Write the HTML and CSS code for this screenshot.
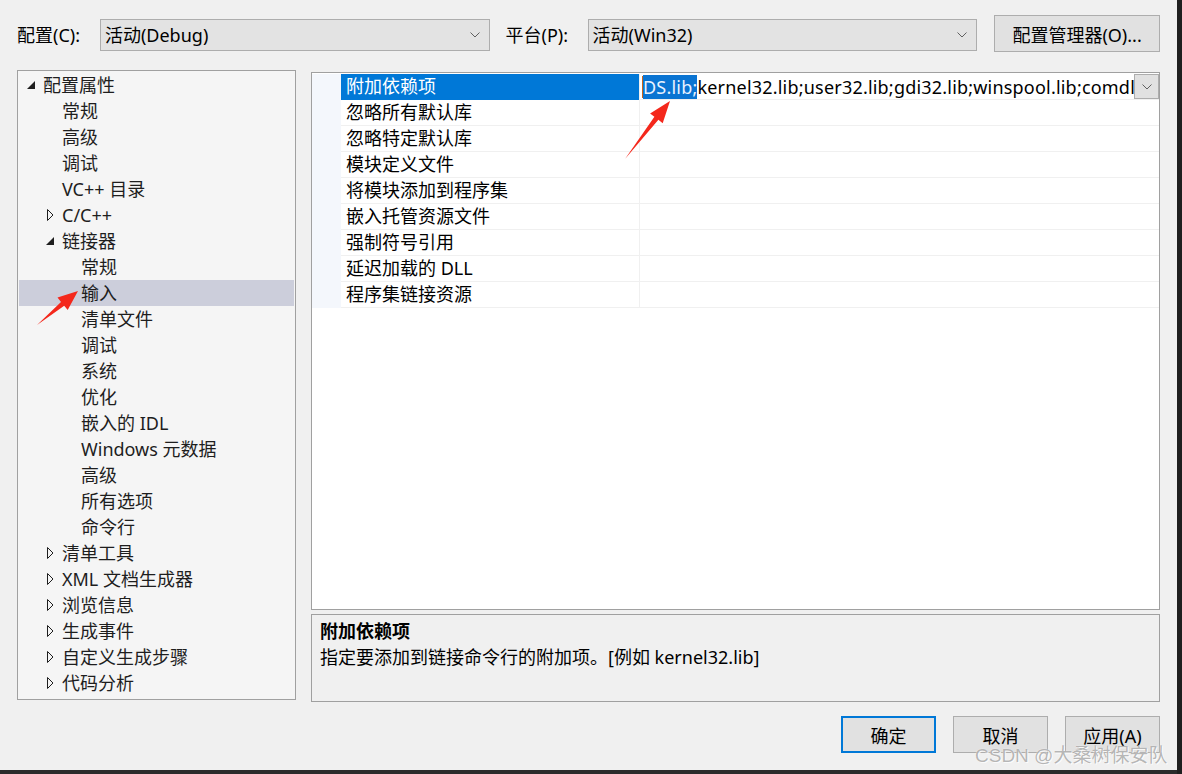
FILE: index.html
```html
<!DOCTYPE html>
<html lang="zh-CN">
<head>
<meta charset="utf-8">
<title>属性页</title>
<link rel="stylesheet" href="styles.css">
</head>
<body>
<div class="screen">
  <div class="window">
    <div class="topbar">
      <span class="lbl lbl-config">配置(C):</span>
      <div class="combo"><span class="combo-text">活动(Debug)</span><svg class="chev" width="10" height="6" viewBox="0 0 10 6"><polyline points="0.5,0.5 5,5 9.5,0.5" fill="none" stroke="#606060" stroke-width="1"/></svg></div>
      <span class="lbl lbl-platform">平台(P):</span>
      <div class="combo"><span class="combo-text">活动(Win32)</span><svg class="chev" width="10" height="6" viewBox="0 0 10 6"><polyline points="0.5,0.5 5,5 9.5,0.5" fill="none" stroke="#606060" stroke-width="1"/></svg></div>
      <button class="btn btn-mgr">配置管理器(O)...</button>
    </div>

    <div class="main">
      <div class="tree">
        <div class="trow l0"><span class="tog"><svg width="9" height="8" viewBox="0 0 9 8"><polygon points="8,0 8,8 0,8" fill="#1e1e1e"/></svg></span><span>配置属性</span></div>
        <div class="trow l1"><span class="tog"></span><span>常规</span></div>
        <div class="trow l1"><span class="tog"></span><span>高级</span></div>
        <div class="trow l1"><span class="tog"></span><span>调试</span></div>
        <div class="trow l1"><span class="tog"></span><span>VC++ 目录</span></div>
        <div class="trow l1"><span class="tog"><svg class="coll" width="7" height="12" viewBox="0 0 7 12"><polygon points="0.5,0.5 6,6 0.5,11.5" fill="none" stroke="#1e1e1e" stroke-width="1"/></svg></span><span>C/C++</span></div>
        <div class="trow l1"><span class="tog"><svg width="9" height="8" viewBox="0 0 9 8"><polygon points="8,0 8,8 0,8" fill="#1e1e1e"/></svg></span><span>链接器</span></div>
        <div class="trow l2"><span class="tog"></span><span>常规</span></div>
        <div class="trow l2 sel"><span class="tog"></span><span>输入</span></div>
        <div class="trow l2"><span class="tog"></span><span>清单文件</span></div>
        <div class="trow l2"><span class="tog"></span><span>调试</span></div>
        <div class="trow l2"><span class="tog"></span><span>系统</span></div>
        <div class="trow l2"><span class="tog"></span><span>优化</span></div>
        <div class="trow l2"><span class="tog"></span><span>嵌入的 IDL</span></div>
        <div class="trow l2"><span class="tog"></span><span>Windows 元数据</span></div>
        <div class="trow l2"><span class="tog"></span><span>高级</span></div>
        <div class="trow l2"><span class="tog"></span><span>所有选项</span></div>
        <div class="trow l2"><span class="tog"></span><span>命令行</span></div>
        <div class="trow l1"><span class="tog"><svg class="coll" width="7" height="12" viewBox="0 0 7 12"><polygon points="0.5,0.5 6,6 0.5,11.5" fill="none" stroke="#1e1e1e" stroke-width="1"/></svg></span><span>清单工具</span></div>
        <div class="trow l1"><span class="tog"><svg class="coll" width="7" height="12" viewBox="0 0 7 12"><polygon points="0.5,0.5 6,6 0.5,11.5" fill="none" stroke="#1e1e1e" stroke-width="1"/></svg></span><span>XML 文档生成器</span></div>
        <div class="trow l1"><span class="tog"><svg class="coll" width="7" height="12" viewBox="0 0 7 12"><polygon points="0.5,0.5 6,6 0.5,11.5" fill="none" stroke="#1e1e1e" stroke-width="1"/></svg></span><span>浏览信息</span></div>
        <div class="trow l1"><span class="tog"><svg class="coll" width="7" height="12" viewBox="0 0 7 12"><polygon points="0.5,0.5 6,6 0.5,11.5" fill="none" stroke="#1e1e1e" stroke-width="1"/></svg></span><span>生成事件</span></div>
        <div class="trow l1"><span class="tog"><svg class="coll" width="7" height="12" viewBox="0 0 7 12"><polygon points="0.5,0.5 6,6 0.5,11.5" fill="none" stroke="#1e1e1e" stroke-width="1"/></svg></span><span>自定义生成步骤</span></div>
        <div class="trow l1"><span class="tog"><svg class="coll" width="7" height="12" viewBox="0 0 7 12"><polygon points="0.5,0.5 6,6 0.5,11.5" fill="none" stroke="#1e1e1e" stroke-width="1"/></svg></span><span>代码分析</span></div>
      </div>

      <div class="rightcol">
        <div class="grid">
          <div class="grow">
            <div class="gmargin"></div>
            <div class="gname active">附加依赖项</div>
            <div class="gval edit">
              <span class="caret"></span><span class="selt">DS.lib;</span><span class="rest">kernel32.lib;user32.lib;gdi32.lib;winspool.lib;comdl</span>
              <span class="ddbtn"><svg width="10" height="6" viewBox="0 0 10 6"><polyline points="0.5,0.5 5,5 9.5,0.5" fill="none" stroke="#606060" stroke-width="1"/></svg></span>
            </div>
          </div>
          <div class="grow"><div class="gmargin"></div><div class="gname">忽略所有默认库</div><div class="gval"></div></div>
          <div class="grow"><div class="gmargin"></div><div class="gname">忽略特定默认库</div><div class="gval"></div></div>
          <div class="grow"><div class="gmargin"></div><div class="gname">模块定义文件</div><div class="gval"></div></div>
          <div class="grow"><div class="gmargin"></div><div class="gname">将模块添加到程序集</div><div class="gval"></div></div>
          <div class="grow"><div class="gmargin"></div><div class="gname">嵌入托管资源文件</div><div class="gval"></div></div>
          <div class="grow"><div class="gmargin"></div><div class="gname">强制符号引用</div><div class="gval"></div></div>
          <div class="grow"><div class="gmargin"></div><div class="gname">延迟加载的 DLL</div><div class="gval"></div></div>
          <div class="grow"><div class="gmargin"></div><div class="gname">程序集链接资源</div><div class="gval"></div></div>
        </div>
        <div class="desc">
          <div class="desc-title">附加依赖项</div>
          <div class="desc-text">指定要添加到链接命令行的附加项。[例如 kernel32.lib]</div>
        </div>
      </div>
    </div>

    <div class="footer">
      <button class="btn dlg default">确定</button>
      <button class="btn dlg">取消</button>
      <button class="btn dlg">应用(A)</button>
    </div>
  </div>
  <div class="edge"></div>
</div>

<svg class="arrows" width="1182" height="774" viewBox="0 0 1182 774">
  <polygon fill="#f4281c" points="37,325 64.2,305.7 67.7,310 78,291 57.5,297.6 61,301.9"/>
  <polygon fill="#f4281c" points="625,159 658.4,119.8 662.7,123.2 670,101 650.1,113.4 654.4,116.8"/>
</svg>
<div class="watermark">CSDN @大桑树保安队</div>
</body>
</html>
```

FILE: styles.css
```css
* { box-sizing: border-box; }

html, body {
  margin: 0;
  padding: 0;
}

body {
  width: 1182px;
  height: 774px;
  overflow: hidden;
  background: #2b2b2b;
  font-family: "Noto Sans", "Noto Sans CJK SC", sans-serif;
  font-size: 18px;
  color: #000;
  position: relative;
}

.screen {
  display: flex;
  height: 774px;
}

.window {
  width: 1177px;
  height: 770px;
  background: #f0f0f0;
  display: flex;
  flex-direction: column;
  padding: 15px 17px 0 17px;
}

.edge {
  flex: 1;
  background: #1f1f1f;
}

/* top bar */
.topbar {
  display: flex;
  align-items: flex-start;
  height: 37px;
}

.lbl {
  height: 37px;
  line-height: 40px;
  color: #000;
  white-space: nowrap;
}
.lbl-config { width: 83px; }
.lbl-platform { width: 82px; margin-left: 16px; }

.combo {
  width: 390px;
  height: 32px;
  margin-top: 4px;
  background: #e3e3e3;
  border: 1px solid #adadad;
  display: flex;
  align-items: center;
  justify-content: space-between;
  padding: 0 9px 0 4px;
}
.combo-text { line-height: 30px; }

.btn {
  font-family: inherit;
  font-size: 18px;
  color: #000;
  background: #e1e1e1;
  border: 1px solid #adadad;
  padding: 0;
  margin: 0;
}
.btn-mgr {
  width: 166px;
  height: 37px;
  margin-left: 17px;
}

/* main */
.main {
  display: flex;
  margin-top: 18px;
  height: 632px;
}

.tree {
  width: 279px;
  height: 630px;
  background: #f5f5f5;
  border: 1px solid #a0a0a0;
  padding: 1px;
  color: #1e1e1e;
}

.trow {
  height: 26px;
  display: flex;
  align-items: center;
  line-height: 26px;
  white-space: nowrap;
}
.trow.l0 { padding-left: 8px; }
.trow.l1 { padding-left: 27px; }
.trow.l2 { padding-left: 46px; }
.trow.sel { background: #cccedb; }

.tog {
  width: 16px;
  height: 26px;
  display: flex;
  align-items: center;
  flex: none;
}
.tog svg { display: block; }
.tog .coll { margin-left: 1px; }

.rightcol {
  width: 849px;
  margin-left: 15px;
  margin-top: 2px;
  display: flex;
  flex-direction: column;
}

.grid {
  height: 538px;
  background: #fff;
  border: 1px solid #a0a0a0;
  padding-top: 1px;
}

.grow {
  display: flex;
  height: 26px;
}
.gmargin {
  width: 29px;
  background: #f4f7fc;
  flex: none;
}
.gname {
  width: 298px;
  flex: none;
  padding-left: 5px;
  line-height: 25px;
  border-bottom: 1px solid #f0f0f0;
  white-space: nowrap;
}
.gname.active {
  background: #0078d7;
  color: #fff;
  border-bottom-color: #0078d7;
}
.gval {
  flex: 1;
  border-left: 1px solid #f0f0f0;
  border-bottom: 1px solid #f0f0f0;
  position: relative;
  overflow: hidden;
  white-space: nowrap;
  line-height: 24px;
}
.gval.edit {
  display: flex;
  align-items: center;
  padding-left: 2px;
  padding-right: 25px;
}
.caret {
  width: 1px;
  height: 22px;
  background: #c8651a;
  flex: none;
}
.selt {
  background: #0a74d2;
  color: #e8f2ff;
  flex: none;
  height: 24px;
  letter-spacing: 0.2px;
}
.rest {
  flex: none;
  letter-spacing: 0.2px;
}
.ddbtn {
  position: absolute;
  right: 0;
  top: 0;
  width: 25px;
  height: 25px;
  background: #e1e1e1;
  border: 1px solid #adadad;
  display: flex;
  align-items: center;
  justify-content: center;
}

.desc {
  height: 88px;
  margin-top: 4px;
  background: #f0f0f0;
  border: 1px solid #a0a0a0;
  padding: 3px 8px;
}
.desc-title {
  font-weight: bold;
  line-height: 26px;
}
.desc-text {
  line-height: 26px;
}

/* footer */
.footer {
  display: flex;
  justify-content: flex-end;
  gap: 17px;
  margin-top: 14px;
}
.btn.dlg {
  width: 95px;
  height: 37px;
}
.btn.dlg.default {
  border: 2px solid #0078d7;
}

/* overlays */
.arrows {
  position: absolute;
  left: 0;
  top: 0;
  pointer-events: none;
}

.watermark {
  position: absolute;
  left: 975px;
  top: 743px;
  font-size: 19px;
  line-height: 26px;
  color: rgba(120, 120, 120, 0.55);
  text-shadow: 0 0 1px #fff, 1px 1px 0 rgba(255,255,255,0.8);
  white-space: nowrap;
  font-family: "Liberation Sans", "Noto Sans CJK SC", sans-serif;
}
```
